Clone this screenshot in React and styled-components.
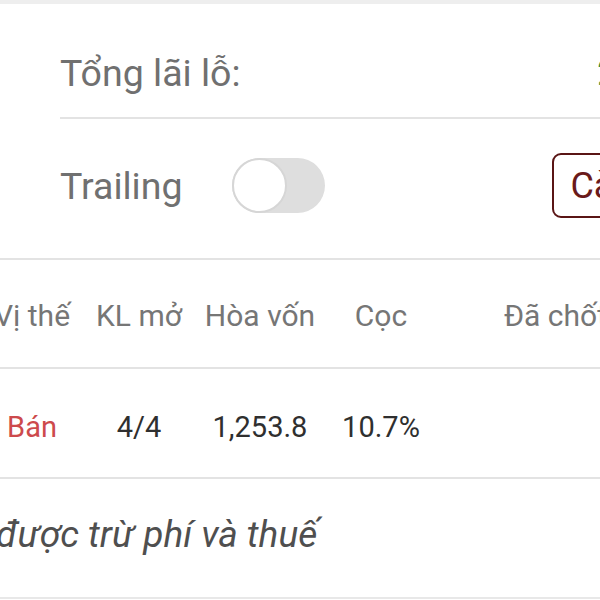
import React from "react";
import styled, { createGlobalStyle } from "styled-components";

const GlobalStyle = createGlobalStyle`
  html, body {
    margin: 0;
    padding: 0;
    background: #fff;
  }
  body {
    font-family: Roboto, "Noto Sans", "Liberation Sans", sans-serif;
  }
`;

const columns = [
  { key: "side", title: "Vị thế" },
  { key: "open", title: "KL mở" },
  { key: "breakEven", title: "Hòa vốn" },
  { key: "margin", title: "Cọc" },
  { key: "closed", title: "Đã chốt lãi/lỗ" },
];

const position = {
  side: "Bán",
  open: "4/4",
  breakEven: "1,253.8",
  margin: "10.7%",
  closed: "",
};

const App = () => {
  return (
    <>
      <GlobalStyle />
      <Screen>
        <Summary>
          <PnlRow>
            <Label>Tổng lãi lỗ:</Label>
            <PnlValue>2,000</PnlValue>
          </PnlRow>
          <TrailingRow>
            <Label>Trailing</Label>
            <Switch>
              <Thumb />
            </Switch>
            <SettingsButton>Cài đặt</SettingsButton>
          </TrailingRow>
        </Summary>

        <Table>
          <TableScroll>
            <HeadRow>
              {columns.map((c) => (
                <HeadCell key={c.key}>{c.title}</HeadCell>
              ))}
            </HeadRow>
            <DataRow>
              {columns.map((c) => (
                <Cell key={c.key} $sell={c.key === "side"}>
                  {position[c.key]}
                </Cell>
              ))}
            </DataRow>
          </TableScroll>
          <NoteRow>
            <Note>được trừ phí và thuế</Note>
          </NoteRow>
        </Table>
      </Screen>
    </>
  );
};

export default App;

const Screen = styled.div`
  width: 600px;
  height: 600px;
  overflow: hidden;
  background: #fff;
  border-top: 4px solid #eeeeee;
  box-sizing: border-box;
`;

const Summary = styled.section`
  width: 720px;
  padding: 0 18px 0 60px;
  box-sizing: border-box;
`;

const PnlRow = styled.div`
  display: flex;
  align-items: flex-start;
  justify-content: space-between;
  height: 115px;
  padding-top: 47px;
  box-sizing: border-box;
  border-bottom: 2px solid #e3e3e3;
`;

const Label = styled.span`
  font-size: 37.5px;
  line-height: 44px;
  color: #707070;
  white-space: nowrap;
`;

const PnlValue = styled.span`
  font-size: 36px;
  line-height: 44px;
  color: #3a8d3d;
  padding-right: 17px;
`;

const TrailingRow = styled.div`
  display: flex;
  align-items: center;
  height: 139px;
  padding: 34px 0 40px;
  box-sizing: border-box;
`;

const Switch = styled.div`
  position: relative;
  width: 93px;
  height: 55px;
  margin-left: 49px;
  border-radius: 28px;
  background: #dedede;
`;

const Thumb = styled.span`
  position: absolute;
  left: 0;
  top: 0;
  width: 55px;
  height: 55px;
  border-radius: 50%;
  background: #fff;
  border: 2px solid #d6d6d6;
  box-sizing: border-box;
`;

const SettingsButton = styled.button`
  margin-left: auto;
  height: 65px;
  padding: 0 16px;
  border: 2px solid #5a1515;
  border-radius: 9px;
  background: #fff;
  color: #6a1a1a;
  font-family: inherit;
  font-size: 36px;
  line-height: 42px;
  white-space: nowrap;
`;

const Table = styled.section`
  border-top: 2px solid #e3e3e3;
`;

const TableScroll = styled.div`
  margin-left: -28px;
  width: 786px;
`;

const Row = styled.div`
  display: grid;
  grid-template-columns: 120px 94px 148px 94px 330px;
  box-sizing: border-box;
  border-bottom: 2px solid #e3e3e3;
`;

const HeadRow = styled(Row)`
  height: 109px;
  padding-top: 38px;
`;

const DataRow = styled(Row)`
  height: 110px;
  padding-top: 40px;
`;

const HeadCell = styled.div`
  text-align: center;
  white-space: nowrap;
  font-size: 30px;
  line-height: 36px;
  color: #767676;
`;

const Cell = styled.div`
  text-align: center;
  white-space: nowrap;
  font-size: 29px;
  line-height: 36px;
  color: ${(p) => (p.$sell ? "#cd4a4c" : "#2f2f2f")};
`;

const NoteRow = styled.div`
  height: 120px;
  padding-top: 35px;
  box-sizing: border-box;
  border-bottom: 2px solid #e8e8e8;
`;

const Note = styled.div`
  margin-left: -4px;
  font-size: 37px;
  line-height: 42px;
  font-style: italic;
  color: #4f4f4f;
  white-space: nowrap;
`;
